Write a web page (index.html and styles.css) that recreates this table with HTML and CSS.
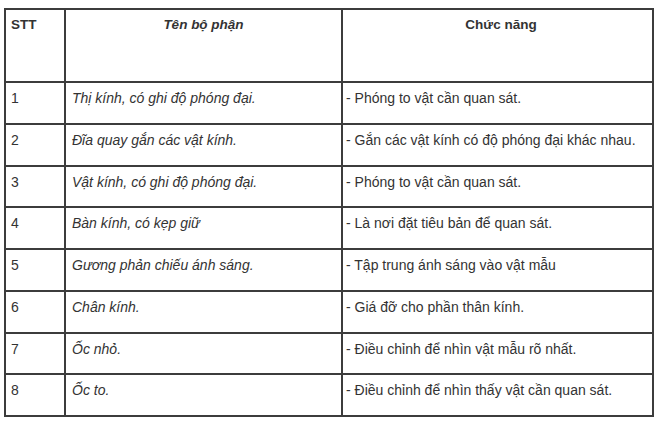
FILE: index.html
```html
<!DOCTYPE html>
<html lang="vi">
<head>
<meta charset="utf-8">
<title>Kính hiển vi</title>
<link rel="stylesheet" href="styles.css">
</head>
<body>
<table class="parts">
  <colgroup>
    <col class="c-stt">
    <col class="c-name">
    <col class="c-func">
  </colgroup>
  <thead>
    <tr class="head">
      <th class="stt">STT</th>
      <th class="name"><em>Tên bộ phận</em></th>
      <th class="func">Chức năng</th>
    </tr>
  </thead>
  <tbody>
    <tr><td>1</td><td><em>Thị kính, có ghi độ phóng đại.</em></td><td>- Phóng to vật cần quan sát.</td></tr>
    <tr><td>2</td><td><em>Đĩa quay gắn các vật kính.</em></td><td>- Gắn các vật kính có độ phóng đại khác nhau.</td></tr>
    <tr><td>3</td><td><em>Vật kính, có ghi độ phóng đại.</em></td><td>- Phóng to vật cần quan sát.</td></tr>
    <tr><td>4</td><td><em>Bàn kính, có kẹp giữ</em></td><td>- Là nơi đặt tiêu bản để quan sát.</td></tr>
    <tr><td>5</td><td><em>Gương phản chiếu ánh sáng.</em></td><td>- Tập trung ánh sáng vào vật mẫu</td></tr>
    <tr><td>6</td><td><em>Chân kính.</em></td><td>- Giá đỡ cho phần thân kính.</td></tr>
    <tr><td>7</td><td><em>Ốc nhỏ.</em></td><td>- Điều chỉnh để nhìn vật mẫu rõ nhất.</td></tr>
    <tr><td>8</td><td><em>Ốc to.</em></td><td>- Điều chỉnh để nhìn thấy vật cần quan sát.</td></tr>
  </tbody>
</table>
</body>
</html>
```
FILE: styles.css
```css
html, body {
  margin: 0;
  padding: 0;
  background: #ffffff;
}

body {
  font-family: "Liberation Sans", Arial, sans-serif;
  font-size: 14px;
  line-height: 18px;
  color: #333333;
}

.parts {
  margin: 8px 0 0 4px;
  width: 650px;
  table-layout: fixed;
  border-collapse: separate;
  border-spacing: 0;
  border-top: 2px solid #3c3c3c;
  border-left: 2px solid #3c3c3c;
}

.c-stt { width: 60px; }
.c-name { width: 277px; }
.c-func { width: 311px; }

.parts th,
.parts td {
  box-sizing: border-box;
  border-right: 2px solid #3c3c3c;
  border-bottom: 2px solid #3c3c3c;
  vertical-align: top;
  text-align: left;
  padding: 6px 5px 0 5px;
  font-weight: normal;
  height: 41.75px;
}

.parts td em {
  font-style: italic;
}

.parts td:nth-child(2) {
  padding-left: 6px;
}

.parts td:nth-child(3) {
  padding-left: 3px;
}

.head th {
  height: 73px;
  padding-top: 6px;
  font-weight: bold;
  font-size: 13.5px;
}

.head th.name,
.head th.func {
  text-align: center;
}

.head th.func {
  padding-left: 12px;
}

.head th em {
  font-style: italic;
}
```
